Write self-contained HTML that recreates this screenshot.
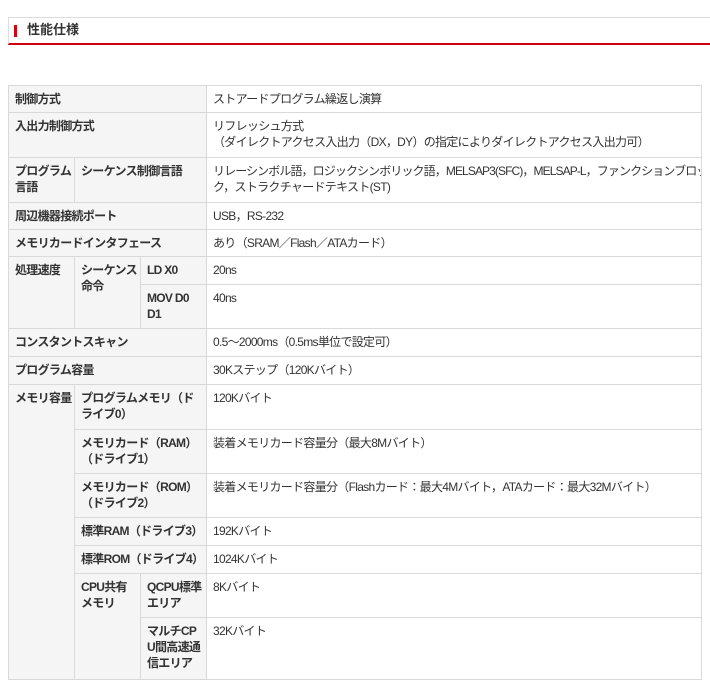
<!DOCTYPE html>
<html><head><meta charset="utf-8"><style>
html,body{margin:0;padding:0;background:#fff;width:710px;height:672px;overflow:hidden}
body{font-family:"Liberation Sans","Noto Sans CJK JP",sans-serif;color:#333;font-size:12px}
.h{position:absolute;left:8px;top:17px;width:710px;height:25px;border-top:1px solid #ddd;border-left:1px solid #ddd;border-bottom:2px solid #d0000f}
.h i{position:absolute;left:5px;top:7px;width:3px;height:12px;background:#d0000f}
.h b{position:absolute;left:18px;top:4px;font-size:13px;line-height:16px;color:#333}
table{position:absolute;left:8px;top:85px;border-collapse:collapse;table-layout:fixed;width:693px}
td{border:1px solid #d9d9d9;vertical-align:top;padding:5px 1px 0 6px;line-height:16px;overflow:hidden;word-break:break-all;letter-spacing:-0.7px}
td.k{background:#f5f5f5;font-weight:bold}
</style></head><body>
<div class="h"><i></i><b>性能仕様</b></div>
<table>
<colgroup><col style="width:66px"><col style="width:66px"><col style="width:66px"><col style="width:495px"></colgroup>
<tr style="height:27px"><td class="k" colspan="3">制御方式</td><td>ストアードプログラム繰返し演算</td></tr>
<tr style="height:45px"><td class="k" colspan="3">入出力制御方式</td><td>リフレッシュ方式<br>（ダイレクトアクセス入出力（DX，DY）の指定によりダイレクトアクセス入出力可）</td></tr>
<tr style="height:45px"><td class="k">プログラム<br>言語</td><td class="k" colspan="2">シーケンス制御言語</td><td><span style="white-space:nowrap;letter-spacing:-0.9px">リレーシンボル語，ロジックシンボリック語，MELSAP3(SFC)，MELSAP-L，ファンクションブロッ</span><br>ク，ストラクチャードテキスト(ST)</td></tr>
<tr style="height:27px"><td class="k" colspan="3">周辺機器接続ポート</td><td>USB，RS-232</td></tr>
<tr style="height:27px"><td class="k" colspan="3">メモリカードインタフェース</td><td>あり（SRAM／Flash／ATAカード）</td></tr>
<tr style="height:28px"><td class="k" rowspan="2">処理速度</td><td class="k" rowspan="2">シーケンス<br>命令</td><td class="k">LD X0</td><td>20ns</td></tr>
<tr style="height:44px"><td class="k">MOV D0<br>D1</td><td>40ns</td></tr>
<tr style="height:28px"><td class="k" colspan="3">コンスタントスキャン</td><td>0.5～2000ms（0.5ms単位で設定可）</td></tr>
<tr style="height:28px"><td class="k" colspan="3">プログラム容量</td><td>30Kステップ（120Kバイト）</td></tr>
<tr style="height:45px"><td class="k" rowspan="7">メモリ容量</td><td class="k" colspan="2">プログラムメモリ（ド<br>ライブ0）</td><td>120Kバイト</td></tr>
<tr style="height:44px"><td class="k" colspan="2">メモリカード（RAM）<br>（ドライブ1）</td><td>装着メモリカード容量分（最大8Mバイト）</td></tr>
<tr style="height:44px"><td class="k" colspan="2">メモリカード（ROM）<br>（ドライブ2）</td><td>装着メモリカード容量分（Flashカード：最大4Mバイト，ATAカード：最大32Mバイト）</td></tr>
<tr style="height:28px"><td class="k" colspan="2" style="white-space:nowrap">標準RAM（ドライブ3）</td><td>192Kバイト</td></tr>
<tr style="height:28px"><td class="k" colspan="2" style="white-space:nowrap">標準ROM（ドライブ4）</td><td>1024Kバイト</td></tr>
<tr style="height:44px"><td class="k" rowspan="2">CPU共有<br>メモリ</td><td class="k">QCPU標準<br>エリア</td><td>8Kバイト</td></tr>
<tr style="height:62px"><td class="k">マルチCP<br>U間高速通<br>信エリア</td><td>32Kバイト</td></tr>
</table>
</body></html>
